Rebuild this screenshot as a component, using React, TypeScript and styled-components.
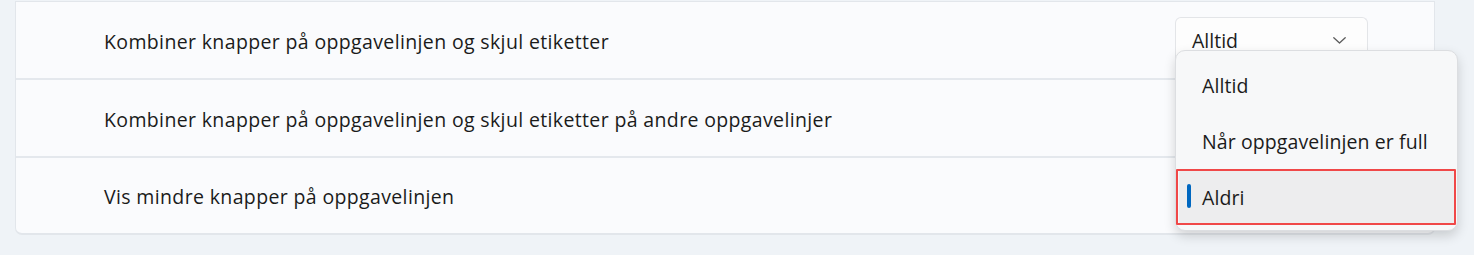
import styled, { createGlobalStyle } from 'styled-components';

const GlobalStyle = createGlobalStyle`
  html, body {
    margin: 0;
    padding: 0;
    background: #eff3f7;
  }
  body {
    font-family: 'Open Sans', 'Noto Sans', sans-serif;
    color: #1b1b1b;
  }
`;

const Page = styled.div`
  width: 1474px;
  height: 255px;
  padding: 1px 39px 0 15px;
  box-sizing: border-box;
  overflow: hidden;
`;

const Card = styled.div`
  background: #fafbfd;
  border: 1px solid #e2e6eb;
  border-bottom-width: 2px;
  border-radius: 0 0 7px 7px;
  display: flex;
  flex-direction: column;
`;

const Row = styled.div<{ last?: boolean }>`
  height: ${(p) => (p.last ? '75px' : '76px')};
  display: flex;
  align-items: center;
  padding: 0 66px 0 88px;
  border-bottom: ${(p) => (p.last ? 'none' : '2px solid #e4e8ed')};
  position: relative;
`;

const Label = styled.div`
  flex: 1;
  font-size: 19.5px;
  letter-spacing: 0.36px;
  padding-top: 2px;
`;

const ComboWrap = styled.div`
  position: relative;
  align-self: flex-start;
  margin-top: 15px;
`;

const Combo = styled.div`
  width: 193px;
  height: 46px;
  box-sizing: border-box;
  border: 1px solid #e3e5e8;
  border-bottom-color: #d6d8db;
  border-radius: 6px;
  background: #fdfdfd;
  display: flex;
  align-items: center;
  justify-content: space-between;
  padding: 0 21px 0 16px;
  font-size: 19.5px;
`;

const Popup = styled.div`
  position: absolute;
  top: 33px;
  left: 0;
  width: 283px;
  height: 181px;
  box-sizing: border-box;
  padding: 6px 0;
  background: #f7f8f9;
  border: 1px solid #dcdee1;
  border-radius: 10px;
  box-shadow: 0 5px 12px rgba(0, 0, 0, 0.16);
  display: flex;
  flex-direction: column;
  z-index: 2;
`;

const Item = styled.div<{ active?: boolean }>`
  height: 56px;
  flex: none;
  position: relative;
  display: flex;
  align-items: center;
  font-size: 19.5px;
  letter-spacing: 0.1px;
  background: ${(p) => (p.active ? '#ededee' : 'transparent')};
  margin: ${(p) => (p.active ? '0 3px' : '0')};
  padding-left: ${(p) => (p.active ? '23px' : '26px')};
  border-radius: 4px;
`;

const Indicator = styled.span`
  position: absolute;
  left: 8px;
  top: 15px;
  width: 4px;
  height: 24px;
  border-radius: 2px;
  background: #0067c0;
`;

const Highlight = styled.span`
  position: absolute;
  left: -3px;
  right: -2px;
  top: 0;
  height: 56px;
  box-sizing: border-box;
  border: 2px solid #f04848;
  border-radius: 1px;
  pointer-events: none;
`;

const Chevron = () => (
  <svg width="13" height="7" viewBox="0 0 13 7" fill="none">
    <polyline
      points="0.8,0.8 6.5,6 12.2,0.8"
      stroke="#5c5c5c"
      strokeWidth="1.3"
      strokeLinecap="round"
      strokeLinejoin="round"
    />
  </svg>
);

const options = ['Alltid', 'Når oppgavelinjen er full', 'Aldri'];

const App = () => (
  <Page>
    <GlobalStyle />
    <Card>
      <Row>
        <Label>Kombiner knapper på oppgavelinjen og skjul etiketter</Label>
        <ComboWrap>
          <Combo>
            <span>Alltid</span>
            <Chevron />
          </Combo>
          <Popup>
            {options.map((o) => (
              <Item key={o} active={o === 'Aldri'}>
                {o === 'Aldri' && <Indicator />}
                {o}
                {o === 'Aldri' && <Highlight />}
              </Item>
            ))}
          </Popup>
        </ComboWrap>
      </Row>
      <Row>
        <Label>Kombiner knapper på oppgavelinjen og skjul etiketter på andre oppgavelinjer</Label>
      </Row>
      <Row last>
        <Label>Vis mindre knapper på oppgavelinjen</Label>
      </Row>
    </Card>
  </Page>
);

export default App;
